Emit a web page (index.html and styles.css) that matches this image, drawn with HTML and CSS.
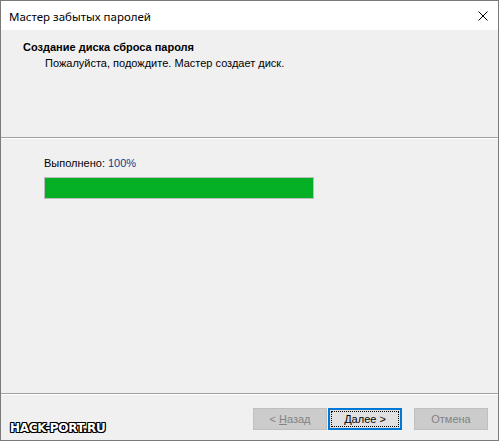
FILE: index.html
```html
<!DOCTYPE html>
<html lang="ru">
<head>
<meta charset="utf-8">
<link rel="stylesheet" href="styles.css">
</head>
<body>
<div class="window">
  <div class="titlebar">
    <span class="title">Мастер забытых паролей</span>
    <svg class="close" width="10" height="10" viewBox="0 0 10 10"><path d="M0.5 0.5 L9.5 9.5 M9.5 0.5 L0.5 9.5" stroke="#000" stroke-width="1" fill="none"/></svg>
  </div>
  <div class="header">
    <div class="h-title">Создание диска сброса пароля</div>
    <div class="h-sub">Пожалуйста, подождите. Мастер создает диск.</div>
  </div>
  <div class="sep"></div>
  <div class="content">
    <div class="progress-label">Выполнено: <span class="pct">100%</span></div>
    <div class="progress"><div class="fill" style="width:100%"></div></div>
  </div>
  <div class="sep"></div>
  <div class="footer">
    <button class="btn disabled"><span>&lt; <u>Н</u>азад</span></button>
    <button class="btn default"><span class="focus"><span><u>Д</u>алее &gt;</span></span></button>
    <button class="btn disabled cancel"><span>Отмена</span></button>
  </div>
  <div class="watermark">HACK-PORT.RU</div>
</div>
</body>
</html>
```
FILE: styles.css
```css
html, body {
  margin: 0;
  padding: 0;
  background: #f0f0f0;
}
.window {
  position: relative;
  width: 499px;
  height: 441px;
  box-sizing: border-box;
  border: 1px solid #7a7a7a;
  background: #f0f0f0;
  display: flex;
  flex-direction: column;
  font-family: "Liberation Sans", Arial, sans-serif;
  font-size: 11px;
  line-height: 13px;
  color: #000;
}
.titlebar {
  height: 29px;
  background: #fff;
  display: flex;
  align-items: center;
  justify-content: space-between;
  padding: 0 10px 0 8px;
}
.title {
  font-family: "Noto Sans", "Open Sans", sans-serif;
  font-size: 11.5px;
  color: #000;
  margin-top: 1px;
}
.close {
  display: block;
}
.header {
  height: 107px;
  box-sizing: border-box;
  padding: 11px 0 0 22px;
}
.h-title {
  font-weight: bold;
}
.h-sub {
  margin-top: 3px;
  padding-left: 22px;
}
.sep {
  height: 0;
  border-top: 1px solid #a0a0a0;
  border-bottom: 1px solid #ffffff;
}
.content {
  flex: 1;
  padding: 18px 0 0 43px;
}
.pct {
  color: #0c3b8f;
}
.progress {
  margin-top: 7px;
  width: 270px;
  height: 22px;
  box-sizing: border-box;
  border: 1px solid #bcbcbc;
  background: #e6e6e6;
}
.fill {
  height: 100%;
  background: #06b025;
}
.footer {
  height: 45px;
  box-sizing: border-box;
  display: flex;
  justify-content: flex-end;
  align-items: flex-start;
  padding: 13px 10px 0 0;
  gap: 1px;
}
.btn {
  width: 74px;
  height: 22px;
  box-sizing: border-box;
  font-family: "Liberation Sans", Arial, sans-serif;
  font-size: 11px;
  padding: 0;
  margin: 0;
  display: flex;
  align-items: center;
  justify-content: center;
}
.btn.disabled {
  background: #cccccc;
  border: 1px solid #bfbfbf;
  color: #838383;
}
.btn.default {
  background: #e1e1e1;
  border: 2px solid #0078d7;
  color: #000;
  padding: 1px;
}
.btn.cancel {
  margin-left: 11px;
}
.focus {
  flex: 1;
  align-self: stretch;
  display: flex;
  align-items: center;
  justify-content: center;
  border: 1px dotted #000;
}
.watermark {
  position: absolute;
  left: 9px;
  bottom: 6px;
  font-family: "DejaVu Sans", sans-serif;
  font-weight: bold;
  font-size: 12px;
  line-height: 12px;
  letter-spacing: -0.3px;
  color: #fff;
  text-shadow: 1px 0 0 #000, -1px 0 0 #000, 0 1px 0 #000, 0 -1px 0 #000, 1px 1px 0 #000, -1px -1px 0 #000, 1px -1px 0 #000, -1px 1px 0 #000;
}
```
